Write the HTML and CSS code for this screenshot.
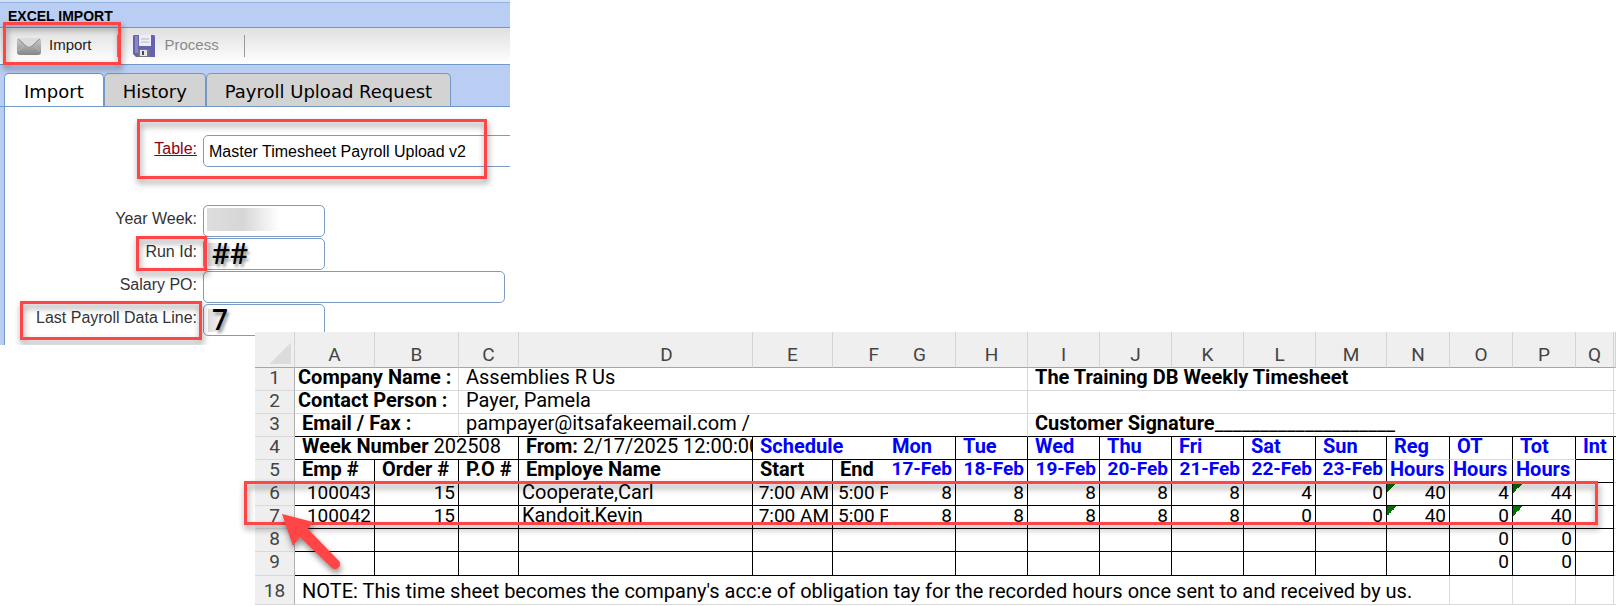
FILE: index.html
```html
<!DOCTYPE html>
<html lang="en">
<head>
    <meta charset="UTF-8">
    <meta name="viewport" content="width=device-width, initial-scale=1.0">
    <title>Excel Import</title>
    <link rel="stylesheet" href="styles.css">
</head>
<body>
    <div class="panel">
        <h1 class="title">EXCEL IMPORT</h1>
        <div class="toolbar">
            <button type="button" class="tool">
                <svg width="24" height="18" viewBox="0 0 24 18">
                    <defs>
                        <linearGradient id="mail" x1="0" y1="0" x2="0" y2="1">
                            <stop offset="0" stop-color="#d0d0d0"/>
                            <stop offset="1" stop-color="#858585"/>
                        </linearGradient>
                    </defs>
                    <rect x="0" y="1" width="24" height="17" rx="3" fill="url(#mail)"/>
                    <path d="M2 1 H22 L15 9 Q12 12 9 9 Z" fill="#dcdcdc"/>
                    <path d="M1 2 L9 9 Q12 12 15 9 L23 2" fill="none" stroke="#8f8f8f" stroke-width="1"/>
                    <path d="M1 14 L7 9 M23 14 L17 9" stroke="#b9b9b9" fill="none"/>
                </svg>
                <span>Import</span>
            </button>
            <button type="button" class="tool process" disabled>
                <svg width="22" height="22" viewBox="0 0 22 22">
                    <path d="M1 0 H21 L22 1 V22 H3 L0 19 V1 Z" fill="#6662ae"/>
                    <path d="M2 1 H5 V18 H2 Z" fill="#8a86cb"/>
                    <rect x="6" y="0" width="12" height="11" fill="#eeeef8"/>
                    <path d="M8 4 H16 M8 7 H16" stroke="#b5b5c6"/>
                    <rect x="5" y="14" width="12" height="8" fill="#77757f"/>
                    <rect x="7" y="15" width="7" height="6" fill="#e6e6e6"/>
                    <rect x="9" y="16" width="2" height="4" fill="#4a4a55"/>
                </svg>
                <span>Process</span>
            </button>
            <div class="mark mark-import"></div>
        </div>
        <div class="tabs">
            <button type="button" class="tab active">Import</button>
            <button type="button" class="tab">History</button>
            <button type="button" class="tab">Payroll Upload Request</button>
        </div>
        <form class="form">
            <div class="row row-table">
                <label for="table"><a href="#table">Table:</a></label>
                <select id="table"><option>Master Timesheet Payroll Upload v2</option></select>
                <div class="mark mark-table"></div>
            </div>
            <div class="row">
                <label for="yearWeek">Year Week:</label>
                <input type="text" id="yearWeek" class="hidden-value">
            </div>
            <div class="row">
                <label for="runId">Run Id:</label>
                <input type="text" id="runId" class="big" value="##">
                <div class="mark mark-run"></div>
            </div>
            <div class="row">
                <label for="salaryPo">Salary PO:</label>
                <input type="text" id="salaryPo" class="wide">
            </div>
            <div class="row">
                <label for="lastLine">Last Payroll Data Line:</label>
                <input type="text" id="lastLine" class="big" value="7">
                <div class="mark mark-last"></div>
            </div>
        </form>
    </div>

    <div class="sheet">
        <table>
            <colgroup>
                <col class="c-head"><col class="c-a"><col class="c-b"><col class="c-c"><col class="c-d"><col class="c-a"><col class="c-f"><col class="c-g">
                <col class="c-day"><col class="c-day"><col class="c-day"><col class="c-day"><col class="c-day"><col class="c-m">
                <col class="c-hours"><col class="c-hours"><col class="c-hours"><col class="c-q"><col class="c-rest">
            </colgroup>
            <thead>
                <tr>
                    <th class="corner"></th><th>A</th><th>B</th><th>C</th><th class="col-d">D</th><th>E</th><th class="col-f">F</th><th class="col-g">G</th><th>H</th><th>I</th><th>J</th><th>K</th><th>L</th><th>M</th><th>N</th><th>O</th><th>P</th><th>Q</th><th></th>
                </tr>
            </thead>
            <tbody>
                <tr class="light">
                    <th>1</th><td colspan="2" class="b tight">Company Name :</td><td colspan="6">Assemblies R Us</td><td colspan="9" class="b">The Training DB Weekly Timesheet</td><td></td>
                </tr>
                <tr class="light">
                    <th>2</th><td colspan="2" class="b tight">Contact Person :</td><td colspan="6">Payer, Pamela</td><td colspan="9"></td><td></td>
                </tr>
                <tr class="light last">
                    <th>3</th><td colspan="2" class="b">Email / Fax :</td><td colspan="6">pampayer@itsafakeemail.com /</td><td colspan="9" class="b">Customer Signature<span class="sign">____________________</span></td><td></td>
                </tr>
                <tr>
                    <th>4</th><td colspan="3"><b>Week Number</b> 202508</td><td><b>From:</b> 2/17/2025 12:00:00</td><td colspan="2" class="day open">Schedule</td><td class="day date">Mon</td><td class="day">Tue</td><td class="day">Wed</td><td class="day">Thu</td><td class="day">Fri</td><td class="day">Sat</td><td class="day">Sun</td><td class="day soft">Reg</td><td class="day soft">OT</td><td class="day soft">Tot</td><td class="day">Int</td><td></td>
                </tr>
                <tr>
                    <th>5</th><td class="b">Emp #</td><td class="b">Order #</td><td class="b">P.O #</td><td class="b">Employe Name</td><td class="b">Start</td><td class="b open">End</td><td class="day num">17-Feb</td><td class="day num">18-Feb</td><td class="day num">19-Feb</td><td class="day num">20-Feb</td><td class="day num">21-Feb</td><td class="day num">22-Feb</td><td class="day num">23-Feb</td><td class="day tight">Hours</td><td class="day tight">Hours</td><td class="day tight">Hours</td><td></td><td></td>
                </tr>
                <tr>
                    <th>6</th><td class="n">100043</td><td class="n">15</td><td></td><td class="tight">Cooperate,Carl</td><td class="n">7:00 AM</td><td class="open time">5:00 PM</td><td class="n">8</td><td class="n">8</td><td class="n">8</td><td class="n">8</td><td class="n">8</td><td class="n">4</td><td class="n">0</td><td class="n flag">40</td><td class="n">4</td><td class="n flag">44</td><td></td><td></td>
                </tr>
                <tr>
                    <th>7</th><td class="n">100042</td><td class="n">15</td><td></td><td class="tight">Kandoit,Kevin</td><td class="n">7:00 AM</td><td class="open time">5:00 PM</td><td class="n">8</td><td class="n">8</td><td class="n">8</td><td class="n">8</td><td class="n">8</td><td class="n">0</td><td class="n">0</td><td class="n flag">40</td><td class="n">0</td><td class="n flag">40</td><td></td><td></td>
                </tr>
                <tr>
                    <th>8</th><td></td><td></td><td></td><td></td><td></td><td class="open"></td><td></td><td></td><td></td><td></td><td></td><td></td><td></td><td></td><td class="n">0</td><td class="n">0</td><td></td><td></td>
                </tr>
                <tr class="tall">
                    <th>9</th><td></td><td></td><td></td><td></td><td></td><td class="open"></td><td></td><td></td><td></td><td></td><td></td><td></td><td></td><td></td><td class="n">0</td><td class="n">0</td><td></td><td></td>
                </tr>
                <tr class="light note">
                    <th>18</th><td colspan="14">NOTE: This time sheet becomes the company's acc:e of obligation tay for the recorded hours once sent to and received by us.</td><td></td><td></td><td></td><td></td>
                </tr>
            </tbody>
        </table>
        <div class="mark mark-rows"></div>
        <svg class="arrow" width="64" height="64" viewBox="0 0 64 64">
            <path d="M2 2 L33 10 L28 17 L59 49 A5 5 0 0 1 52 56 L20 25 L13 34 Z" fill="#ff4545"/>
        </svg>
    </div>
</body>
</html>
```
FILE: styles.css
```css
* {
    box-sizing: border-box;
}

body {
    margin: 0;
    overflow: hidden;
    background-color: white;
    font-family: "Liberation Sans", Arial, sans-serif;
}

.panel {
    max-width: 510px;
    overflow: hidden;
    border-top: 2px solid #d3dff3;
    background-color: #b9cef2;
}

.title {
    margin: 0;
    padding: 6px 8px 3px;
    border-top: 1px solid #8fb4e4;
    border-bottom: 1px solid #7099c8;
    font-size: 14px;
    line-height: 15px;
}

.toolbar {
    position: relative;
    display: flex;
    align-items: center;
    height: 37px;
    border-bottom: 1px solid #7099c8;
    background: linear-gradient(#e0e0e0, #ffffff);
}

.tool {
    display: flex;
    align-items: center;
    gap: 8px;
    height: 22px;
    margin-left: 17px;
    padding: 0 25px 0 0;
    border: 0;
    border-right: 1px solid #999999;
    background: none;
    color: #222222;
    font-family: inherit;
    font-size: 15px;
}

.tool span {
    padding-bottom: 3px;
}

.tool.process {
    gap: 10px;
    margin-left: 15px;
    color: #8a8a8a;
}

.tabs {
    display: flex;
    padding: 8px 0 0 4px;
    border-bottom: 1px solid #7099c8;
}

.tab {
    height: 33px;
    padding: 3px 18px 0;
    border: 1px solid #7099c8;
    border-bottom: 0;
    border-radius: 5px 5px 0 0;
    background-color: #d3d3d3;
    color: black;
    font-family: "DejaVu Sans", Verdana, sans-serif;
    font-size: 18px;
}

.tab.active {
    padding: 3px 19px 0;
    background-color: white;
}

.form {
    display: flex;
    flex-direction: column;
    gap: 1px;
    margin-left: 4px;
    padding: 28px 0 9px;
    border-left: 1px solid #7099c8;
    background-color: white;
}

.row {
    position: relative;
    display: grid;
    grid-template-columns: 192px 1fr;
    column-gap: 6px;
}

.row-table {
    margin-bottom: 37px;
}

label {
    padding-top: 5px;
    color: #333333;
    font-size: 16px;
    line-height: 18px;
    text-align: right;
}

label a {
    color: #8b0010;
}

input,
select {
    width: 122px;
    height: 32px;
    padding: 0 5px;
    border: 1px solid #7a9cc4;
    border-radius: 5px;
    background-color: white;
    color: black;
    font-family: inherit;
    font-size: 16px;
}

select {
    appearance: none;
    width: 120%;
}

input.wide {
    width: 302px;
}

input.hidden-value {
    background-image: linear-gradient(90deg, #dedede, #d6d6d6 50%, #ffffff);
    background-repeat: no-repeat;
    background-position: 3px 2px;
    background-size: 72px 23px;
}

input.big {
    padding: 0 8px 3px;
    background-image: linear-gradient(90deg, #dddddd, #ffffff);
    background-repeat: no-repeat;
    background-position: 4px 4px;
    background-size: 20px 23px;
    font-family: "Open Sans", sans-serif;
    font-size: 28px;
    font-weight: 600;
    text-shadow: 2px 3px 3px #999999;
}

/* red callouts */
.mark {
    position: absolute;
    z-index: 2;
    border: 3px solid #ff4545;
    filter: drop-shadow(1px 4px 3px rgba(0, 0, 0, 0.45));
    pointer-events: none;
}

.mark-import {
    top: -6px;
    left: 3px;
    width: 118px;
    height: 43px;
}

.mark-table {
    top: -16px;
    left: 132px;
    width: 350px;
    height: 60px;
}

.mark-run {
    top: -2px;
    left: 131px;
    width: 71px;
    height: 35px;
}

.mark-last {
    top: -3px;
    left: 15px;
    width: 182px;
    height: 39px;
}

.mark-rows {
    top: 149px;
    left: -11px;
    right: 18px;
    height: 44px;
}

.arrow {
    position: absolute;
    z-index: 3;
    top: 180px;
    left: 25px;
    filter: drop-shadow(1px 4px 3px rgba(0, 0, 0, 0.45));
}

/* timesheet */
.sheet {
    position: relative;
    margin: -13px 0 0 255px;
    background-color: white;
}

table {
    width: 100%;
    table-layout: fixed;
    border-collapse: separate;
    border-spacing: 0;
    font-family: Roboto, sans-serif;
    font-size: 20px;
    line-height: 20px;
}

.c-head { width: 40px; }
.c-a { width: 80px; }
.c-b { width: 84px; }
.c-c { width: 60px; }
.c-d { width: 234px; }
.c-f { width: 55px; }
.c-g { width: 68px; }
.c-day { width: 72px; }
.c-m { width: 71px; }
.c-hours { width: 63px; }
.c-q { width: 38px; }
.c-rest { width: 2px; }

th {
    padding: 0;
    border-right: 1px solid #b0b0b0;
    border-bottom: 1px solid #d9d9d9;
    background-color: #efefef;
    color: #444444;
    font-size: 19px;
    font-weight: 400;
    vertical-align: top;
}

thead th {
    height: 36px;
    padding-bottom: 2px;
    border-right-color: #d4d4d4;
    border-bottom-color: #a6a6a6;
    vertical-align: bottom;
}

thead .col-d {
    padding-left: 62px;
}

thead .col-f {
    padding-right: 9px;
    border-right: 0;
    text-align: right;
}

thead .col-g {
    padding-right: 4px;
}

.corner {
    background-image: linear-gradient(135deg, transparent 50%, #dcdcdc 50%);
    background-repeat: no-repeat;
    background-position: 15px 11px;
    background-size: 21px 21px;
}

td {
    height: 23px;
    padding: 0 0 0 7px;
    border-right: 1px solid black;
    border-bottom: 1px solid black;
    overflow: hidden;
    line-height: 18px;
    white-space: nowrap;
    vertical-align: top;
}

td:last-child,
.light td:last-child {
    padding: 0;
    border-right: 0;
    border-bottom-color: #d9d9d9;
}

.light td {
    border-color: #d9d9d9;
}

.light.last td {
    border-bottom-color: black;
}

.b,
.day {
    font-weight: 700;
}

.day {
    color: #0000ff;
}

.sign {
    font-weight: 400;
}

td.tight {
    padding-left: 3px;
}

td.date {
    padding-left: 4px;
}

td.num {
    padding: 0 3px 0 0;
    font-size: 19px;
    text-align: right;
}

td.n {
    padding: 0 3px 0 0;
    font-size: 19px;
    text-align: right;
}

td.time {
    padding-left: 5px;
    font-size: 19px;
}

td.n,
td.time {
    line-height: 19px;
}

td.open {
    border-right: 0;
}

td.soft {
    border-bottom-color: #d9d9d9;
}

td.flag {
    background-image: linear-gradient(135deg, #007000 50%, transparent 50%);
    background-repeat: no-repeat;
    background-size: 10px 10px;
}

.tall td {
    height: 24px;
}

.note td,
.note th {
    height: 29px;
    padding-top: 5px;
    line-height: 20px;
}
```
